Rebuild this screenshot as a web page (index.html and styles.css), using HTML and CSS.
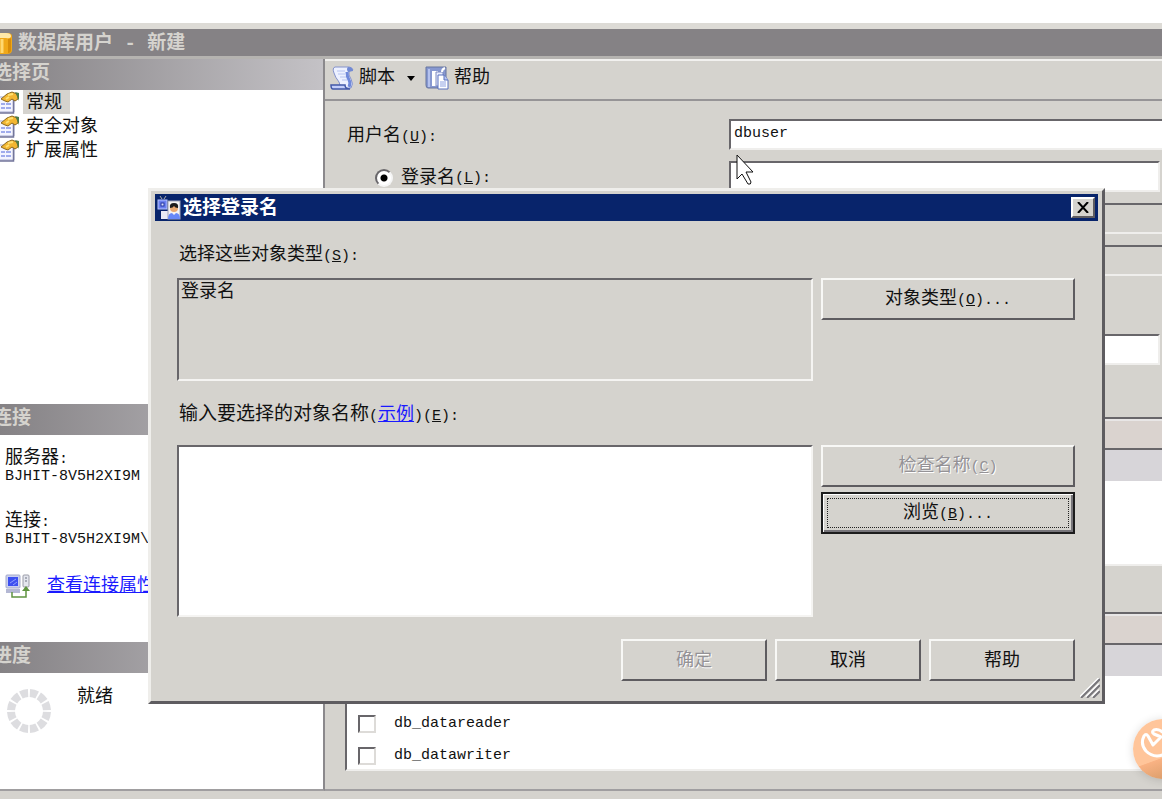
FILE: index.html
```
<!DOCTYPE html>
<html lang="zh-CN">
<head>
  <meta charset="UTF-8">
  <title>数据库用户 - 新建</title>
  <link rel="stylesheet" href="styles.css">
</head>
<body>
  <!-- shared icons -->
  <svg class="sprite" aria-hidden="true">
    <symbol id="page-icon" viewBox="0 0 24 24">
      <path d="M2 7h16v15H2z" fill="#f4f5ff" stroke="#a4a8cc"/>
      <path d="M17.500 9v14H3" fill="none" stroke="#73769a" stroke-width="1.500"/>
      <path d="M5 14h4M10 14h5M5 18h4M10 18h5" stroke="#a0acec" stroke-width="2"/>
      <path d="M5 9l6-5 5-2 5 2 1 5-3 2-3-2-4 3-3-1z" fill="#f2b632" stroke="#8c6a20"/>
      <path d="M12 5l5-1M10 9l3-2" stroke="#ffe070" stroke-width="2"/>
      <path d="M19 2l4 1v8l-2-5z" fill="#4d7c4a"/>
    </symbol>
  </svg>

  <div class="window">
    <header class="title-bar">
      <svg class="db-icon" viewBox="0 0 12 24" aria-hidden="true">
        <path d="M0 2h7q5 0 5 3v14q0 4-5 4H0z" fill="#f0a818"/>
        <path d="M0 2h6q5 0 5 3t-5 2H0z" fill="#ffe9a8"/>
        <path d="M2 8v14" stroke="#ffd870" stroke-width="3"/>
        <path d="M8 8q3 0 3-2v13q0 3-3 3z" fill="#d88c08"/>
      </svg>
      <h1>数据库用户<span class="en"> - </span>新建</h1>
    </header>

    <div class="content">
      <aside class="sidebar">
        <section class="pages">
          <h2>选择页</h2>
          <ul>
            <li><svg><use href="#page-icon"/></svg><a class="selected" href="#general">常规</a></li>
            <li><svg><use href="#page-icon"/></svg><a href="#securables">安全对象</a></li>
            <li><svg><use href="#page-icon"/></svg><a href="#extended">扩展属性</a></li>
          </ul>
        </section>

        <section class="connection">
          <h2>连接</h2>
          <dl>
            <dt>服务器<span class="en">:</span></dt>
            <dd class="en">BJHIT-8V5H2XI9M</dd>
            <dt>连接<span class="en">:</span></dt>
            <dd class="en">BJHIT-8V5H2XI9M\</dd>
          </dl>
          <div class="view-link">
            <svg viewBox="0 0 26 24" aria-hidden="true">
              <rect x="1" y="1" width="14" height="13" rx="1" fill="#c9cff0" stroke="#a5aac8"/>
              <rect x="3" y="3" width="10" height="9" fill="#3d50f0"/>
              <path d="M5 9l6-4M8 11l4-3" stroke="#8fa0ff"/>
              <path d="M1 15h14v4H1z" fill="#b4b8d4"/>
              <rect x="18" y="1" width="6" height="12" rx="1" fill="#e4e6ee" stroke="#9a9ca8"/>
              <path d="M20 4h2M20 7h2" stroke="#6b7080"/>
              <path d="M7 18v5h14v-9" fill="none" stroke="#5f9440" stroke-width="1.500"/>
              <path d="M17 17l4-5 4 5z" fill="#5f9440"/>
            </svg>
            <a href="#properties">查看连接属性</a>
          </div>
        </section>

        <section class="progress">
          <h2>进度</h2>
          <div class="status">
            <svg viewBox="0 0 46 46" aria-hidden="true">
              <circle cx="23" cy="23" r="18" fill="none" stroke="#dddde0" stroke-width="8" pathLength="120" stroke-dasharray="8 2" stroke-dashoffset="-1"/>
            </svg>
            <span>就绪</span>
          </div>
        </section>
      </aside>

      <main class="main">
        <div class="toolbar">
          <button type="button">
            <svg viewBox="0 0 24 24" aria-hidden="true">
              <path d="M5 1h14q3 0 4 3l-4 1q-1 4 2 8 3 5 0 9H9q2-3 0-6-4-5-5-9-2-5 1-6z" fill="#edf1ff" stroke="#8492cc"/>
              <path d="M18 1q-2 2 0 5l5-1q0-4-5-4z" fill="#7189d4"/>
              <path d="M1 19h14q0 4 5 4H3q-2 0-2-4z" fill="#c3cefa" stroke="#4258a8" stroke-width="1.500"/>
              <path d="M7 5h8M8 8h7M10 11h6M12 14h5" stroke="#b6c3f0"/>
              <path d="M17 6q0 5 2 8t0 7" fill="none" stroke="#7089da" stroke-width="3"/>
            </svg>
            脚本
            <svg class="arrow" viewBox="0 0 8 5" aria-hidden="true"><path d="M0 0h8L4 5z"/></svg>
          </button>
          <button type="button">
            <svg viewBox="0 0 24 24" aria-hidden="true">
              <path d="M1 1h20v21H3q-2 0-2-3z" fill="#8798d0" stroke="#66749f"/>
              <path d="M4 3v18" stroke="#b5c2ee" stroke-width="2"/>
              <path d="M7 5h6v15H7z" fill="#fff"/>
              <path d="M11 6h7v14h-7z" fill="#e8ecff" stroke="#7d8abf"/>
              <path d="M13 9h6l4 5v9H13z" fill="#fff" stroke="#5870bd"/>
              <path d="M19 9v5h4" fill="#b8c6f5" stroke="#5870bd"/>
              <path d="M15 16h6M15 18h6M15 20h6" stroke="#8ea2e2"/>
              <path d="M17 6q0-3 3-4" fill="none" stroke="#fff" stroke-width="2"/>
            </svg>
            帮助
          </button>
        </div>

        <form class="user-form">
          <div class="row">
            <label for="user">用户名<span class="en">(<u>U</u>):</span></label>
            <input class="wide" type="text" id="user" value="dbuser">
          </div>
          <div class="row">
            <label class="choice"><input type="radio" name="kind" checked>登录名<span class="en">(<u>L</u>):</span></label>
            <input type="text" aria-label="登录名">
          </div>
          <div class="row">
            <input class="wide" type="text" aria-label="证书名称" disabled>
          </div>
          <div class="row">
            <input class="wide" type="text" aria-label="密钥名称" disabled>
          </div>
          <div class="row schema">
            <input type="text" aria-label="默认架构">
          </div>

          <div class="list owned">
            <div class="list-head"></div>
            <div class="list-row current"></div>
          </div>
          <div class="list roles">
            <div class="list-head"></div>
            <div class="list-row current"></div>
            <div class="list-row"></div>
            <label class="list-row"><input type="checkbox"><span class="en">db_datareader</span></label>
            <label class="list-row"><input type="checkbox"><span class="en">db_datawriter</span></label>
          </div>
        </form>
      </main>
    </div>
  </div>

  <div class="dialog" role="dialog" aria-labelledby="dialog-title">
    <header class="dialog-title">
      <svg viewBox="0 0 24 24" aria-hidden="true">
        <path d="M3 0l2 3M9 0L7 3" stroke="#aaa"/>
        <rect x="1" y="4" width="9" height="9" fill="#6b80f0" stroke="#b8c4ff"/>
        <rect x="4" y="7" width="3" height="3" fill="#dce3ff" stroke="#2435a0"/>
        <rect x="4" y="15" width="7" height="8" fill="#e8ebf5"/>
        <rect x="11" y="5" width="12" height="18" fill="#f4f4f4" stroke="#a0a4b8"/>
        <circle cx="17" cy="12" r="4" fill="#e8a870"/>
        <path d="M13 12q-1-5 4-5t4 5q-3 0-4-2-1 2-4 2z" fill="#1c1c1c"/>
        <path d="M11 23q0-6 4-6l2 2 2-2q4 0 4 6z" fill="#6688f8"/>
      </svg>
      <h2 id="dialog-title">选择登录名</h2>
      <button type="button" class="close" aria-label="关闭">
        <svg viewBox="0 0 12 11" aria-hidden="true"><path d="M1 0l10 11M11 0L1 11" stroke="#000" stroke-width="2"/></svg>
      </button>
    </header>

    <form class="dialog-body">
      <label for="types">选择这些对象类型<span class="en">(<u>S</u>):</span></label>
      <textarea id="types" class="types" readonly>登录名</textarea>
      <div class="side">
        <button type="button" class="btn">对象类型<span class="en">(<u>O</u>)...</span></button>
      </div>

      <div class="prompt">
        <label for="names">输入要选择的对象名称</label><span class="en">(</span><a href="#example">示例</a><span class="en">)(<u>E</u>):</span>
      </div>
      <textarea id="names" class="names"></textarea>
      <div class="side">
        <button type="button" class="btn" disabled>检查名称<span class="en">(<u>C</u>)</span></button>
        <button type="button" class="btn focused">浏览<span class="en">(<u>B</u>)...</span></button>
      </div>

      <div class="actions">
        <button type="button" class="btn" disabled>确定</button>
        <button type="button" class="btn">取消</button>
        <button type="button" class="btn">帮助</button>
      </div>
    </form>

    <svg class="grip" viewBox="0 0 20 20" aria-hidden="true">
      <path d="M0 19L19 0M6 19L19 6M12 19l7-7" stroke="#fff" stroke-width="2"/>
      <path d="M1 20L20 1M7 20L20 7M13 20l7-7" stroke="#77757a" stroke-width="2"/>
    </svg>
  </div>

  <svg class="cursor" viewBox="0 0 18 32" aria-hidden="true">
    <path d="M1 1v24l5-5 6 10q3 1 3-2l-5-10h7z" fill="#fff" stroke="#111"/>
  </svg>

  <button type="button" class="bubble" aria-label="助手">
    <svg viewBox="0 0 60 60" aria-hidden="true">
      <path d="M11 17q-4 8 2 15 8 8 19 3M11 17q2-3 4 0l5 9 8-8-7-3q-3-2 0-4 5-2 12 5" fill="none" stroke="#fff" stroke-width="3" stroke-linecap="round" stroke-linejoin="round"/>
    </svg>
  </button>
</body>
</html>
```

FILE: styles.css
```
* {
  box-sizing: border-box;
}

body {
  margin: 0;
  min-height: 100vh;
  position: relative;
  overflow: hidden;
  background: #fff;
  color: #111;
  font-family: "Liberation Mono", "Noto Sans CJK SC", monospace;
  font-size: 18px;
  line-height: 24px;
}

h1, h2, ul, dl, dd {
  margin: 0;
  padding: 0;
}

h1, h2 {
  font-size: 19px;
  line-height: 24px;
}

button, input, textarea {
  font: inherit;
  color: inherit;
}

a {
  color: #1a1aff;
}

.en {
  font-size: 15px;
}

.sprite {
  position: absolute;
  width: 0;
  height: 0;
}

/* main window */
.window {
  display: flex;
  flex-direction: column;
  min-height: 100vh;
  padding-top: 23px;
}

.title-bar {
  display: flex;
  align-items: center;
  gap: 6px;
  height: 36px;
  flex: none;
  background: #858285;
  color: #d5d3ce;
  border-top: 6px solid #dddbd6;
  border-bottom: 3px solid #b5b3b0;
}

.title-bar h1 {
  padding-top: 2px;
}

.title-bar .en {
  font-size: 19px;
  white-space: pre;
}

.db-icon {
  width: 12px;
  height: 24px;
}

.content {
  display: flex;
  flex: 1;
  background: #d5d3ce;
  border-bottom: 8px solid #d5d3ce;
}

.sidebar {
  width: 325px;
  flex: none;
  background: #fff;
  border-right: 2px solid #8b898c;
  border-bottom: 2px solid #a09ea0;
}

.sidebar h2 {
  height: 31px;
  padding-top: 3px;
  text-indent: -7px;
  color: #d5d3ce;
  background: linear-gradient(to right, #858285, #c4c2c6);
}

.pages {
  height: 345px;
}

.pages ul {
  list-style: none;
}

.pages li {
  display: flex;
  align-items: center;
  height: 24px;
}

.pages svg {
  width: 24px;
  height: 24px;
  margin-left: -4px;
}

.pages a {
  height: 24px;
  margin-left: 3px;
  padding: 1px 8px 0 3px;
  color: #111;
  text-decoration: none;
}

.pages .selected {
  background: #d5d3ce;
}

.connection {
  height: 238px;
}

.connection dl {
  padding: 13px 0 0 5px;
}

.connection dt {
  height: 20px;
  line-height: 20px;
}

.connection dd {
  height: 18px;
  line-height: 18px;
  margin-bottom: 25px;
}

.view-link {
  display: flex;
  align-items: center;
  gap: 16px;
  padding-left: 5px;
}

.view-link svg {
  width: 26px;
  height: 24px;
}

.status {
  display: flex;
  gap: 25px;
  padding: 12px 0 0 6px;
}

.status svg {
  width: 46px;
  height: 46px;
  margin-top: 3px;
}

.main {
  flex: 1;
  min-width: 0;
  border-bottom: 2px solid #a09ea0;
}

.toolbar {
  display: flex;
  gap: 10px;
  height: 42px;
  padding: 0 5px 4px;
  border-top: 2px solid #f2f1ef;
  border-bottom: 2px solid #969496;
}

.toolbar button {
  display: flex;
  align-items: center;
  gap: 5px;
  padding: 0;
  border: 0;
  background: none;
}

.toolbar svg {
  width: 24px;
  height: 24px;
}

.toolbar .arrow {
  width: 8px;
  height: 5px;
  margin-left: 7px;
}

.user-form {
  padding: 18px 2px 0 22px;
}

.row {
  display: flex;
  justify-content: flex-end;
  height: 31px;
  margin-bottom: 11px;
}

.row label {
  flex: none;
  width: 382px;
  padding-top: 5px;
}

.row input[type="text"] {
  flex: 0 1 calc(100% - 382px);
  min-width: 0;
  padding: 0 3px 2px;
  background: #fff;
  border: 2px solid;
  border-color: #68666a #efeeec #efeeec #68666a;
  border-radius: 0;
  font-size: 15px;
}

.row .wide[type="text"] {
  margin-right: -6px;
  flex-basis: calc(100% - 376px);
}

.row input:disabled {
  background: #d5d3ce;
}

.row .choice {
  display: flex;
  align-items: center;
  padding: 2px 0 0 28px;
}

.choice .en {
  padding-top: 2px;
}

input[type="radio"] {
  appearance: none;
  width: 18px;
  height: 18px;
  margin: 0 8px 0 0;
  border: 2px solid;
  border-color: #68666a #f5f5f5 #f5f5f5 #68666a;
  border-radius: 50%;
  background: radial-gradient(circle, #000 3px, #fff 4px);
}

.schema {
  margin: 58px 0 52px;
}

.list {
  margin-right: -6px;
  margin-left: -2px;
  overflow: hidden;
  background: #fff;
  border: 2px solid;
  border-color: #68666a #efeeec #efeeec #68666a;
}

.owned {
  height: 149px;
  margin-bottom: 46px;
}

.roles {
  height: 159px;
}

.list-head {
  height: 31px;
  background: #dad3cf;
  border-top: 2px solid #e8e6e6;
  border-bottom: 2px solid #68666a;
}

.list-row {
  display: flex;
  align-items: center;
  gap: 18px;
  height: 32px;
  padding-left: 11px;
}

.current {
  height: 31px;
  background: #d7d5d9;
}

input[type="checkbox"] {
  appearance: none;
  width: 18px;
  height: 18px;
  margin: 0;
  background: #fff;
  border: 2px solid;
  border-color: #68666a #dddbd8 #dddbd8 #68666a;
}

/* login picker, floats over the main window */
.dialog {
  position: absolute;
  top: 188px;
  left: 148px;
  right: 57px;
  padding: 3px 4px 20px;
  background: #d5d3ce;
  border: 3px solid;
  border-color: #efeeeb #5e5c60 #5e5c60 #efeeeb;
}

.dialog-title {
  display: flex;
  align-items: center;
  gap: 2px;
  height: 27px;
  padding: 0 3px 0 2px;
  background: #08246b;
  color: #fff;
}

.dialog-title h2 {
  padding-top: 2px;
}

.dialog-title > svg {
  width: 24px;
  height: 24px;
}

.dialog-title .close {
  display: flex;
  align-items: center;
  justify-content: center;
  width: 24px;
  height: 21px;
  margin-left: auto;
  padding: 0;
  background: #d5d3ce;
  border: 2px solid;
  border-color: #fff #5e5c60 #5e5c60 #fff;
}

.close svg {
  width: 12px;
  height: 11px;
}

.dialog-body {
  display: grid;
  grid-template-columns: 1fr 254px;
  column-gap: 8px;
  padding: 0 23px 0 22px;
}

.dialog-body > label,
.prompt {
  grid-column: 1 / -1;
  height: 57px;
  padding: 22px 0 0 2px;
}

.prompt {
  height: 64px;
}

.prompt label {
  font-size: 19px;
}

textarea {
  display: block;
  padding: 0 2px;
  resize: none;
  background: #fff;
  border: 2px solid;
  border-color: #68666a #f5f4f2 #f5f4f2 #68666a;
  border-radius: 0;
  outline: 0;
}

.types {
  height: 103px;
  background: #d5d3ce;
}

.names {
  height: 172px;
}

.btn {
  height: 42px;
  padding: 1px 0 0;
  background: #d5d3ce;
  border: 2px solid;
  border-color: #f8f8f6 #5e5c60 #5e5c60 #f8f8f6;
  border-radius: 0;
}

.btn:disabled {
  color: #949296;
  text-shadow: 1px 1px #fff;
}

.side {
  display: flex;
  flex-direction: column;
  gap: 5px;
}

.focused {
  border-color: #1c1c1c;
  outline: 1px dotted #222;
  outline-offset: -7px;
  box-shadow: inset 1px 1px #fff, inset -2px -2px #77757a;
}

.actions {
  grid-column: 1 / -1;
  display: flex;
  justify-content: flex-end;
  gap: 8px;
  padding-top: 22px;
}

.actions .btn {
  width: 146px;
}

.grip {
  position: absolute;
  right: 2px;
  bottom: 3px;
  width: 20px;
  height: 20px;
}

.cursor {
  position: absolute;
  top: 154px;
  left: 736px;
  width: 18px;
  height: 32px;
}

.bubble {
  position: absolute;
  right: -31px;
  bottom: 20px;
  width: 60px;
  height: 60px;
  padding: 0;
  border: 0;
  border-radius: 50%;
  background: linear-gradient(160deg, #ffc59a 60%, #f9b283 61%, #dea06e 85%);
  box-shadow: 0 1px 10px rgba(0, 0, 0, 0.15);
}

.bubble svg {
  display: block;
  width: 60px;
  height: 60px;
}
```
